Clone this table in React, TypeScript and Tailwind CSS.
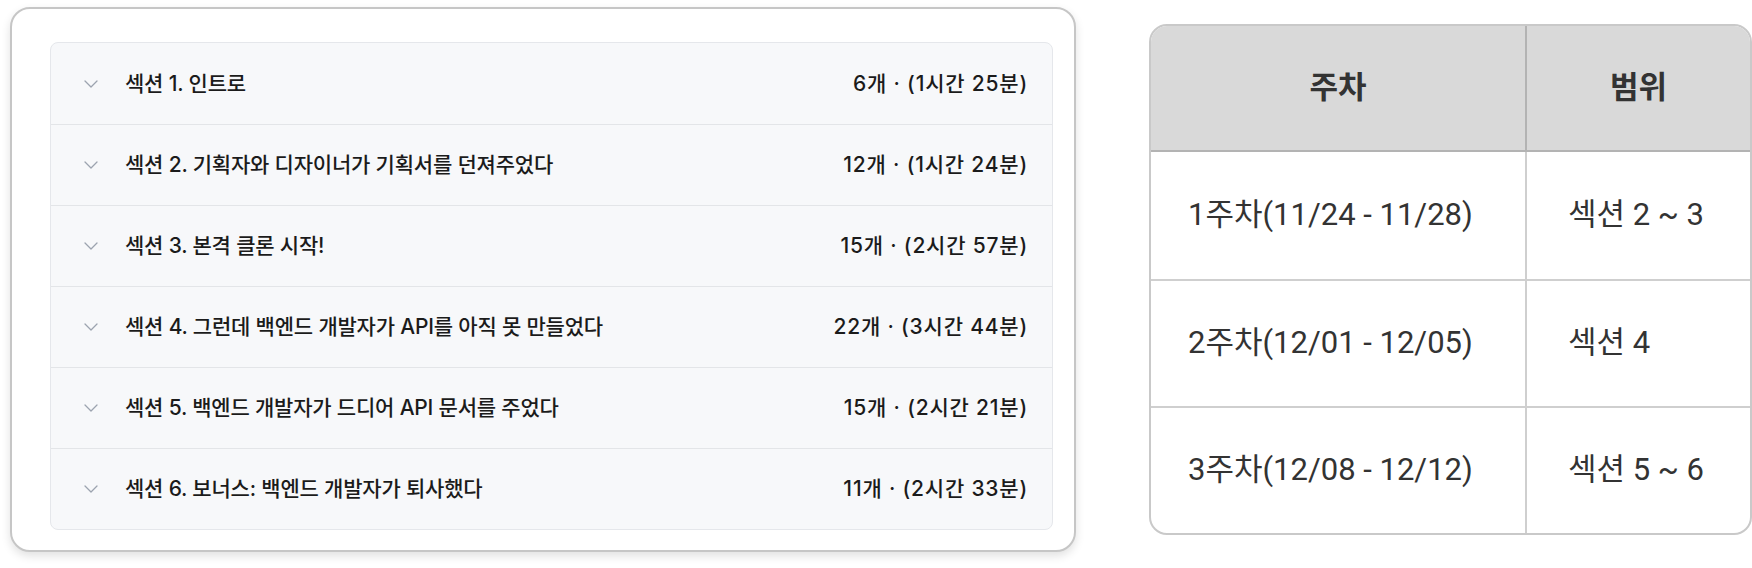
import React from "react";

const sections = [
  { title: "섹션 1. 인트로", meta: "6개 · (1시간 25분)" },
  { title: "섹션 2. 기획자와 디자이너가 기획서를 던져주었다", meta: "12개 · (1시간 24분)" },
  { title: "섹션 3. 본격 클론 시작!", meta: "15개 · (2시간 57분)" },
  { title: "섹션 4. 그런데 백엔드 개발자가 API를 아직 못 만들었다", meta: "22개 · (3시간 44분)" },
  { title: "섹션 5. 백엔드 개발자가 드디어 API 문서를 주었다", meta: "15개 · (2시간 21분)" },
  { title: "섹션 6. 보너스: 백엔드 개발자가 퇴사했다", meta: "11개 · (2시간 33분)" },
];

const weeks = [
  { week: "1주차(11/24 - 11/28)", range: "섹션 2 ~ 3" },
  { week: "2주차(12/01 - 12/05)", range: "섹션 4" },
  { week: "3주차(12/08 - 12/12)", range: "섹션 5 ~ 6" },
];

function Chevron() {
  return (
    <svg width="14" height="8" viewBox="0 0 14 8" fill="none" className="shrink-0">
      <path d="M1 1l6 6 6-6" stroke="#9ca3af" strokeWidth="1.3" strokeLinecap="round" strokeLinejoin="round" />
    </svg>
  );
}

export default function App() {
  return (
    <div className="flex items-start bg-white w-[1752px] h-[568px] overflow-hidden">
      <div className="ml-[10px] mt-[7px] w-[1066px] h-[545px] rounded-[20px] border-2 border-[#c6c6c6] bg-white shadow-[0_4px_10px_rgba(0,0,0,0.12)] pl-[38px] pt-[33px] pr-[21px] pb-[20px]">
        <div className="rounded-[8px] border border-[#e5e7eb] bg-[#f7f8fa] flex flex-col font-['Inter','Noto_Sans_CJK_KR',sans-serif]">
          {sections.map((s, i) => (
            <div
              key={i}
              className={`flex items-center h-[81px] pl-[33px] pr-[24px] ${i > 0 ? "border-t border-[#e3e5e8]" : ""}`}
            >
              <Chevron />
              <span className="ml-[27px] text-[21px] font-medium text-[#1b1b1b] tracking-[-0.2px]">{s.title}</span>
              <span className="ml-auto text-[21px] font-medium text-[#1b1b1b] tracking-[0.8px]">{s.meta}</span>
            </div>
          ))}
        </div>
      </div>

      <div className="ml-[73px] mt-[24px] w-[603px] rounded-[18px] border-2 border-[#c9c9c9] overflow-hidden bg-white font-['Roboto','Noto_Sans_CJK_KR',sans-serif] text-[#333]">
        <div className="grid grid-cols-[376px_1fr] h-[126px] bg-[#d9d9d9] border-b-2 border-[#b3b3b3]">
          <div className="flex items-center justify-center border-r-2 border-[#b3b3b3] text-[31px] font-bold">주차</div>
          <div className="flex items-center justify-center text-[31px] font-bold">범위</div>
        </div>
        {weeks.map((w, i) => (
          <div
            key={i}
            className={`grid grid-cols-[376px_1fr] h-[127px] ${i > 0 ? "border-t-2 border-[#cfcfcf]" : ""}`}
          >
            <div className="flex items-center pl-[37px] border-r-2 border-[#cfcfcf] text-[31px]">{w.week}</div>
            <div className="flex items-center pl-[41px] text-[31px]">{w.range}</div>
          </div>
        ))}
      </div>
    </div>
  );
}
